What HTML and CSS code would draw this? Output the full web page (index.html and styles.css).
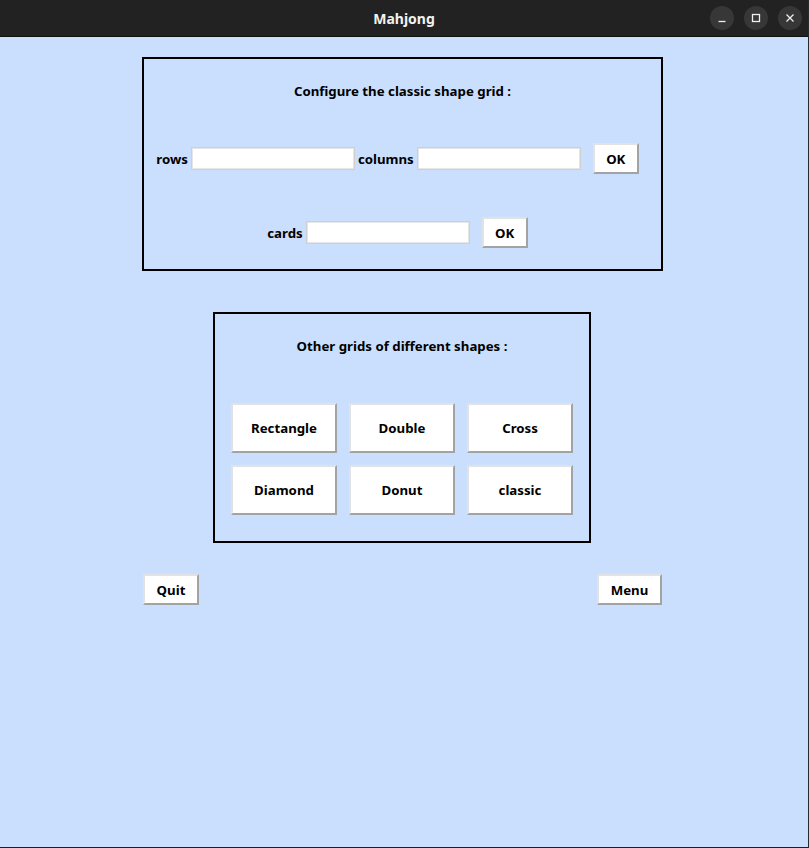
FILE: index.html
```html
<!DOCTYPE html>
<html>
<head>
<meta charset="utf-8">
<title>Mahjong</title>
<link rel="stylesheet" href="styles.css">
</head>
<body>
<div class="window">
  <header class="titlebar">
    <span class="title">Mahjong</span>
    <div class="controls">
      <span class="ctl"><svg width="10" height="10" viewBox="0 0 10 10"><line x1="1.5" y1="8.5" x2="8.5" y2="8.5" stroke="#eee" stroke-width="1.3"/></svg></span>
      <span class="ctl"><svg width="10" height="10" viewBox="0 0 10 10"><rect x="1.5" y="1.5" width="7" height="7" fill="none" stroke="#eee" stroke-width="1.3"/></svg></span>
      <span class="ctl"><svg width="10" height="10" viewBox="0 0 10 10"><path d="M1.5 1.5 L8.5 8.5 M8.5 1.5 L1.5 8.5" stroke="#eee" stroke-width="1.3"/></svg></span>
    </div>
  </header>
  <main class="content">
    <section class="box box-config">
      <div class="box-title">Configure the classic shape grid :</div>
      <div class="row row-grid">
        <span class="lbl">rows</span>
        <input class="field" type="text">
        <span class="lbl lbl-columns">columns</span>
        <input class="field" type="text">
        <button class="btn btn-ok">OK</button>
      </div>
      <div class="row row-cards">
        <span class="lbl">cards</span>
        <input class="field" type="text">
        <button class="btn btn-ok">OK</button>
      </div>
    </section>
    <section class="box box-shapes">
      <div class="box-title">Other grids of different shapes :</div>
      <div class="shape-grid">
        <button class="btn btn-shape">Rectangle</button>
        <button class="btn btn-shape">Double</button>
        <button class="btn btn-shape">Cross</button>
        <button class="btn btn-shape">Diamond</button>
        <button class="btn btn-shape">Donut</button>
        <button class="btn btn-shape">classic</button>
      </div>
    </section>
    <div class="bottom-row">
      <button class="btn btn-quit">Quit</button>
      <button class="btn btn-menu">Menu</button>
    </div>
  </main>
</div>
</body>
</html>
```
FILE: styles.css
```css
* { box-sizing: border-box; }
html, body { margin: 0; padding: 0; }
body {
  width: 809px;
  height: 848px;
  background: #222;
  font-family: "Noto Sans", "DejaVu Sans", sans-serif;
  overflow: hidden;
}
.window {
  width: 809px;
  height: 848px;
  display: flex;
  flex-direction: column;
  background: #cadffd;
  border-bottom: 1px solid #1e1e1e;
  border-right: 1px solid #2a2a2a;
}
.titlebar {
  height: 37px;
  flex: 0 0 37px;
  background: #222222;
  border-bottom: 1px solid #111;
  position: relative;
  display: flex;
  align-items: center;
  justify-content: center;
}
.title {
  color: #f2f2f2;
  font-weight: 700;
  font-size: 14px;
}
.controls {
  position: absolute;
  right: 6px;
  top: 6px;
  display: flex;
  gap: 10px;
}
.ctl {
  width: 24px;
  height: 24px;
  border-radius: 50%;
  background: #373737;
  display: flex;
  align-items: center;
  justify-content: center;
}
.content {
  flex: 1;
  width: 805px;
  display: flex;
  flex-direction: column;
  align-items: center;
  padding-top: 20px;
}
.box {
  border: 2px solid #000;
  display: flex;
  flex-direction: column;
  align-items: center;
}
.box-title {
  font-size: 13.25px;
  font-weight: 700;
  line-height: 18px;
  color: #000;
}
.box-config {
  width: 521px;
  height: 214px;
  padding-top: 23px;
}
.row {
  display: flex;
  align-items: center;
  height: 31px;
  padding-right: 10px;
}
.row-grid { margin-top: 43px; }
.row-cards { margin-top: 43px; }
.lbl {
  font-size: 13.25px;
  font-weight: 700;
  color: #000;
  margin-right: 3px;
}
.lbl-columns { margin-left: 3px; }
.field {
  width: 164px;
  height: 23px;
  border: 1px solid #cfcfcf;
  box-shadow: inset 0 0 0 1px #e6e6e6;
  background: #fff;
  margin: 0;
  padding: 0 3px;
  font-family: inherit;
}
.btn {
  background: #fff;
  border: 2px solid;
  border-color: #e2e2e2 #a3a3a3 #a3a3a3 #e2e2e2;
  font-family: inherit;
  font-size: 13.25px;
  font-weight: 700;
  color: #000;
  padding: 0;
  margin: 0;
}
.btn-ok {
  width: 46px;
  height: 31px;
  margin-left: 12px;
}
.box-shapes {
  margin-top: 41px;
  margin-right: 1px;
  width: 378px;
  height: 231px;
  padding-top: 23px;
}
.shape-grid {
  margin-top: 48px;
  display: grid;
  grid-template-columns: repeat(3, 106px);
  grid-auto-rows: 50px;
  gap: 12px;
}
.bottom-row {
  margin-top: 31px;
  width: 521px;
  display: flex;
  justify-content: space-between;
  padding: 0 1px;
}
.btn-quit { width: 56px; height: 31px; }
.btn-menu { width: 65px; height: 31px; }
```
